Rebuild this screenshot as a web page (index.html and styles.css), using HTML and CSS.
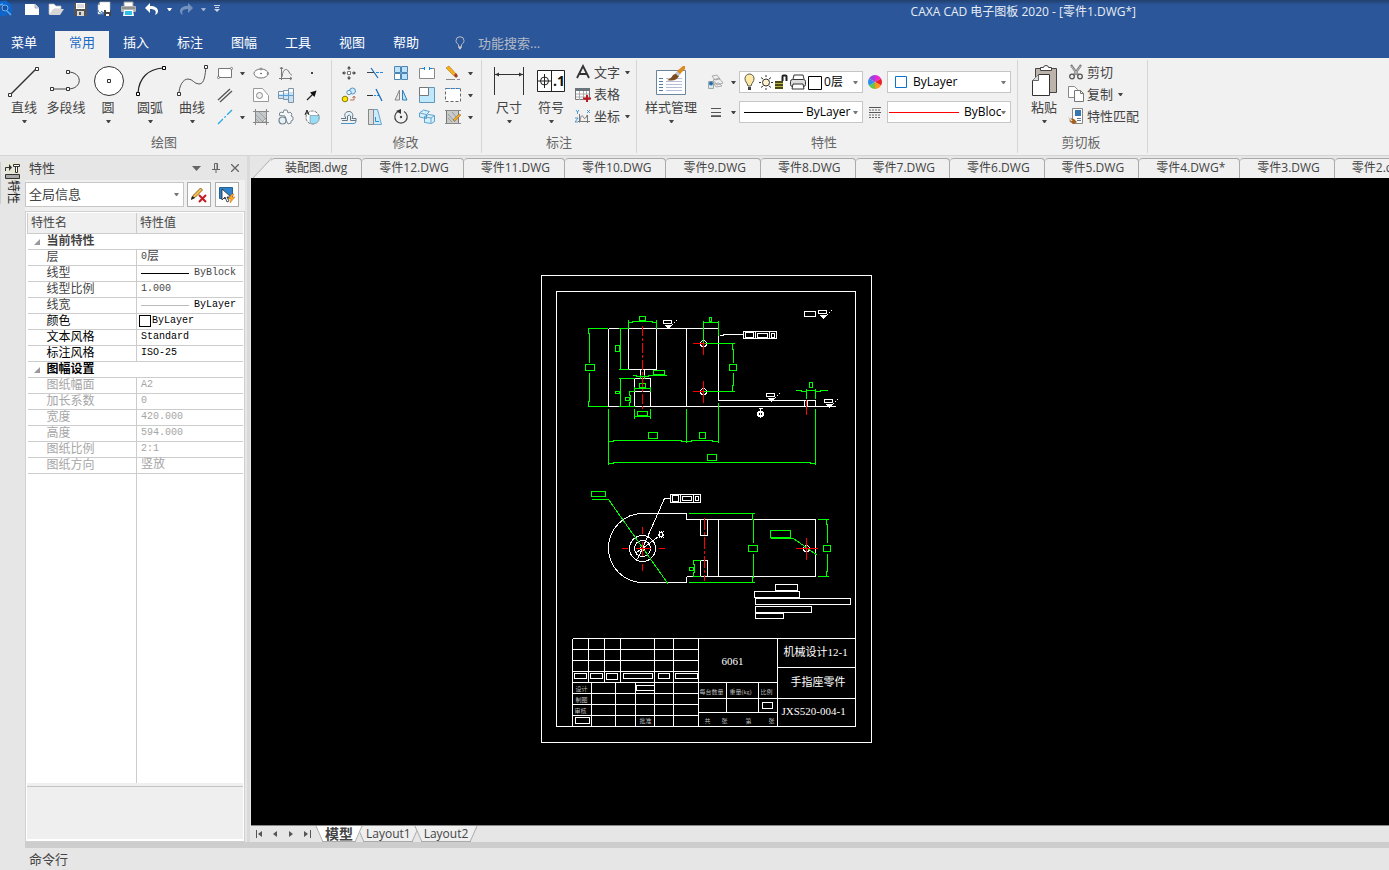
FILE: index.html
```html
<!DOCTYPE html>
<html lang="zh-CN">
<head>
<meta charset="utf-8">
<title>CAXA CAD 电子图板 2020</title>
<link rel="stylesheet" href="styles.css">
</head>
<body>
<header class="titlebar">
  <div class="quick">
    <svg class="logo" width="12" height="18" viewBox="0 0 12 18"><path d="M0 3l5-1 4 3 2 5-1 4M1 14l3-9 4 2-3 8z" fill="none" stroke="#0d66d0" stroke-width="3"/><circle cx="5" cy="8" r="3" fill="#1f4f9f" stroke="#63b5f5"/><path d="M7 11l4 4M0 5l3-1" stroke="#58aef2" stroke-width="1.5"/></svg>
    <button class="qbtn" aria-label="新建"><svg width="16" height="14" viewBox="0 0 16 14"><path d="M1 2h10l4 4v7H1z" fill="#fff"/><path d="M11 2v4h4" fill="#dcdcdc" stroke="#888" stroke-width=".6"/></svg></button>
    <button class="qbtn" aria-label="打开"><svg width="16" height="14" viewBox="0 0 16 14"><path d="M1 2h5l2 2h5v3H6l-3 5H1z" fill="#fff" stroke="#b9b9b9" stroke-width=".7"/><path d="M5 7h11l-4 6H1z" fill="#d6d6d6"/></svg></button>
    <button class="qbtn" aria-label="保存"><svg width="15" height="15" viewBox="0 0 15 15"><path d="M1 1h13v13H2l-1-1z" fill="#555"/><path d="M3 1h9v6H3z" fill="#fff"/><path d="M4 3h7M4 5h7" stroke="#bbb"/><path d="M4 9h7v5H4z" fill="#d8d8d8"/><path d="M6 10h2v3H6z" fill="#555"/></svg></button>
    <button class="qbtn" aria-label="另存为"><svg width="16" height="16" viewBox="0 0 16 16"><path d="M4 1h10v12H2V4z" fill="#fff" stroke="#bbb" stroke-width=".6"/><path d="M4 1v3H2" fill="#999"/><path d="M2 9q1 4 5 3M5 10l3 2-3 2" fill="none" stroke="#2b6fb5"/><path d="M8 9h7v6H8z" fill="#444"/><path d="M10 9h4v2h-4zM10 13h3v2h-3z" fill="#fff"/></svg></button>
    <button class="qbtn" aria-label="打印"><svg width="17" height="16" viewBox="0 0 17 16"><path d="M4 1h9v5H4z" fill="#fff" stroke="#999"/><rect x="1" y="5" width="15" height="6" rx="1" fill="#b4b4b4"/><path d="M2 7h13" stroke="#6c6c6c"/><path d="M4 9h9l1 6H3z" fill="#fff"/><path d="M5 10h7v4H5z" fill="#30bde8"/></svg></button>
    <button class="qbtn" aria-label="撤销"><svg width="16" height="14" viewBox="0 0 16 14"><path d="M6 1v3c5 0 8 2 8 5 0 2-1 3-3 4 2-4 0-6-5-6v4L1 6z" fill="#fff"/></svg></button>
    <button class="qdrop" aria-label="撤销列表"><i class="caret light"></i></button>
    <button class="qbtn dim" aria-label="重做"><svg width="16" height="14" viewBox="0 0 16 14"><path d="M10 1v3C5 4 2 6 2 9c0 2 1 3 3 4-2-4 0-6 5-6v4l5-5z" fill="#fff"/></svg></button>
    <button class="qdrop" aria-label="重做列表"><i class="caret pale"></i></button>
    <button class="qdrop wide" aria-label="自定义快速访问"><svg width="6" height="8" viewBox="0 0 6 8"><path d="M0 .5h6M1 2.500h4" stroke="#ccd5e5"/><path d="M0 4h6L3 7z" fill="#ccd5e5"/></svg></button>
  </div>
  <h1 class="title">CAXA CAD 电子图板 2020 - [零件1.DWG*]</h1>
</header>

<nav class="menu">
  <button class="menu-file">菜单</button>
  <button class="menu-tab active">常用</button>
  <button class="menu-tab">插入</button>
  <button class="menu-tab">标注</button>
  <button class="menu-tab">图幅</button>
  <button class="menu-tab">工具</button>
  <button class="menu-tab">视图</button>
  <button class="menu-tab">帮助</button>
  <label class="search">
    <svg width="10" height="14" viewBox="0 0 10 14"><path d="M3.500 10V8.500C2 7.500 1 6.500 1 4.700a4 4 0 0 1 8 0c0 1.800-1 2.800-2.500 3.800V10" fill="none" stroke="#b8bcc2"/><path d="M3 11h4M4 12.500h2" stroke="#c4c4c4" stroke-width="1.500"/></svg>
    <input type="text" placeholder="功能搜索..." aria-label="功能搜索">
  </label>
</nav>

<section class="ribbon">
  <div class="group">
    <div class="tools">
      <button class="big"><svg width="36" height="36" viewBox="0 0 36 36"><path d="M5 31L30 6" stroke="#333" stroke-width="1.500"/><g fill="#fff" stroke="#333"><path d="M2.500 30.500h3v3h-3zM29.500 4.500h3v3h-3z"/></g></svg><span>直线</span><i class="caret"></i></button>
      <button class="big"><svg width="36" height="36" viewBox="0 0 36 36"><path d="M4 26h16c15 0 15-17 0-17" fill="none" stroke="#444"/><g fill="#fff" stroke="#333"><path d="M2.500 24.500h3v3h-3zM18.500 24.500h3v3h-3zM18.500 7.500h3v3h-3z"/></g></svg><span>多段线</span></button>
      <button class="big"><svg width="36" height="36" viewBox="0 0 36 36"><circle cx="19" cy="18" r="14.500" fill="#fff" stroke="#333"/><path d="M17.500 16.500h3v3h-3z" fill="none" stroke="#333"/></svg><span>圆</span><i class="caret"></i></button>
      <button class="big"><svg width="36" height="36" viewBox="0 0 36 36"><path d="M6 30C7 15 16 6 31 5" fill="none" stroke="#222" stroke-width="1.200"/><g fill="#fff" stroke="#000"><path d="M4.500 29.500h3v3h-3zM30.500 3.500h3v3h-3z"/></g></svg><span>圆弧</span><i class="caret"></i></button>
      <button class="big"><svg width="36" height="36" viewBox="0 0 36 36"><path d="M5 31C5 23 9 16 14 16s6 5 11 5c6 0 6-10 7-17" fill="none" stroke="#555"/><g fill="#fff" stroke="#333"><path d="M3.500 29.500h3v3h-3zM30.500 2.500h3v3h-3z"/></g></svg><span>曲线</span><i class="caret"></i></button>
      <div class="icons draw">
        <button aria-label="矩形"><svg viewBox="0 0 16 16"><path d="M1.500 3.500h13v9h-13z" fill="#fff" stroke="#777"/><g fill="#fff" stroke="#666" stroke-width=".8"><circle cx="1.500" cy="12.500" r="1.100"/><circle cx="14.500" cy="3.500" r="1.100"/></g></svg></button>
        <button class="arrow" aria-label="矩形选项"><i class="caret"></i></button>
        <button aria-label="椭圆"><svg viewBox="0 0 16 16"><ellipse cx="8" cy="8.500" rx="7" ry="4.500" fill="#fff" stroke="#777"/><g fill="#fff" stroke="#666" stroke-width=".8"><circle cx="8" cy="4" r="1"/><circle cx="15" cy="8.500" r=".8"/></g><circle cx="8" cy="8.500" r=".8" fill="#444"/></svg></button>
        <button aria-label="函数曲线"><svg viewBox="0 0 16 16"><path d="M3.500 2v13M1 13.500h13" fill="none" stroke="#777"/><path d="M2 4l1.500-2L5 4M12 12l2 1.500-2 1.500M4 12C5 3 9 3 11 7c1 2 2 3 3 3" fill="none" stroke="#777"/></svg></button>
        <button aria-label="点"><svg viewBox="0 0 16 16"><path d="M7 7h2v2H7z" fill="#444"/></svg></button>

        <button aria-label="平行线"><svg viewBox="0 0 16 16"><path d="M1 13L13 2M3 15L15 4" stroke="#555" stroke-width="1.300"/></svg></button>
        <span></span>
        <button aria-label="轮廓"><svg viewBox="0 0 16 16"><path d="M.5 1.500h9l6 7v6H.500z" fill="#fff" stroke="#999"/><circle cx="6.500" cy="8.500" r="3" fill="#f2f2f2" stroke="#888"/></svg></button>
        <button aria-label="轴"><svg viewBox="0 0 16 16"><path d="M.5 4.500h5v7h-5zM5.500 3.500h5v9h-5zM10.500 1.500h5v14h-5z" fill="#c5e2f6" stroke="#7f93a5"/><path d="M1 5h4v2H1zM6 4h4v2H6zM11 2h4v3h-4z" fill="#f5fafd"/><path d="M0 8.500h16" stroke="#5c9fd6"/></svg></button>
        <button aria-label="箭头"><svg viewBox="0 0 16 16"><path d="M3 13l7-7" stroke="#222" stroke-width="1.200"/><path d="M12.500 3.500L10.500 10 6 5.500z" fill="#111"/></svg></button>

        <button aria-label="中心线"><svg viewBox="0 0 16 16"><path d="M1 15L15 1" stroke="#2ba9e4" stroke-width="1.300" stroke-dasharray="7 2 2 2"/></svg></button>
        <button class="arrow" aria-label="中心线选项"><i class="caret"></i></button>
        <button aria-label="剖面线"><svg viewBox="0 0 16 16"><path d="M2.500 2.500h11v11h-11z" fill="#c3c7ca"/><path d="M2.500 0v16M13.500 0v16M0 2.500h16M0 13.500h16" stroke="#888"/><path d="M3 6l7 7M3 10l3 3M6 3l7 7" stroke="#a0a5a9"/><path d="M13 9l-4 4h4z" fill="#eee" stroke="#777" stroke-width=".6"/></svg></button>
        <button aria-label="齿轮"><svg viewBox="0 0 16 16"><path d="M1.500 6.500V4L4 3l1 1 1-3h3l1 3 2-1 2 2-1 2 2 1v3l-2 1v2l-3 1-1-2-2-6z" fill="#f4f7f9" stroke="#7d8892"/><circle cx="4.500" cy="11.500" r="3.500" fill="#e5f1f9" stroke="#75808a" stroke-width="1.200"/></svg></button>
        <button aria-label="局部放大"><svg viewBox="0 0 16 16"><circle cx="8.500" cy="8.500" r="6.500" fill="#fff" stroke="#777" stroke-dasharray="3 1"/><path d="M6 6.500h9v4c0 3-6 6-9 3z" fill="#9bdcf5" stroke="#6a8799" stroke-width=".6"/><path d="M1 6l2-5 2 5M2 4h2" fill="none" stroke="#222"/></svg></button>
      </div>
    </div>
    <div class="caption">绘图</div>
  </div>

  <div class="group modify-group">
    <div class="tools">
      <div class="icons modify">
        <button aria-label="平移"><svg viewBox="0 0 16 16"><path d="M8 2v3M8 11v3M2 8h3M11 8h3" stroke="#444"/><path d="M8 1l2 2.500H6zM8 15l2-2.500H6zM1 8l2.500-2v4zM15 8l-2.500-2v4z" fill="#444"/><path d="M6.500 6.500h3v3h-3z" fill="#fff" stroke="#777"/></svg></button>
        <button aria-label="裁剪"><svg viewBox="0 0 16 16"><path d="M0 7.500h7" stroke="#444"/><path d="M9 7.500h7" stroke="#248ce0" stroke-dasharray="3 1"/><path d="M4 3l7 10" stroke="#176bba" stroke-width="1.200"/></svg></button>
        <button aria-label="阵列"><svg viewBox="0 0 16 16"><g fill="#bfe3fb" stroke="#4b86b5"><path d="M1.500 1.500h6v6h-6zM8.500 1.500h6v6h-6zM8.500 8.500h6v6h-6z"/><path d="M1.500 8.500h6v6h-6z" fill="#fff"/></g></svg></button>
        <button aria-label="打断"><svg viewBox="0 0 16 16"><path d="M4 3.500H.5v10h15v-10H12" fill="#fff" stroke="#888"/><path d="M3 3.500h2.500M10.500 3.500H13" stroke="#1784dc"/><path d="M5 2h1v3H5zM10 2h1v3h-1z" fill="#1784dc"/></svg></button>
        <button aria-label="删除"><svg viewBox="0 0 16 16"><path d="M1 3l3-2 8 9-2 2z" fill="#f7ae19" stroke="#9e6812" stroke-width=".5"/><path d="M9 10l2-2 2 3-2 2z" fill="#a33a2c"/><path d="M1 14.500h9M12 14.500h3" stroke="#888"/></svg></button>
        <button class="arrow" aria-label="删除选项"><i class="caret"></i></button>

        <button aria-label="平移复制"><svg viewBox="0 0 16 16"><circle cx="11.500" cy="4" r="3" fill="#c9eaff" stroke="#5795c5"/><circle cx="8" cy="5.500" r="2.200" fill="#e4f5ff" stroke="#5795c5"/><circle cx="4" cy="12" r="2.800" fill="#ffe600" stroke="#877a16"/><path d="M9 13h4v-3M11.500 11l1.500-2 1.500 2" fill="none" stroke="#a9563c" stroke-width=".8"/></svg></button>
        <button aria-label="延伸"><svg viewBox="0 0 16 16"><path d="M0 8.500h6" stroke="#333"/><path d="M7 8.500h5" stroke="#248ce0" stroke-dasharray="2 1"/><path d="M9 2l6 12" stroke="#176bba" stroke-width="1.200"/></svg></button>
        <button aria-label="镜像"><svg viewBox="0 0 16 16"><path d="M6.500 3v10H2z" fill="#e6e6e6" stroke="#888"/><path d="M9.500 3v10H14z" fill="#bce5ff" stroke="#317fb8"/></svg></button>
        <button aria-label="缩放"><svg viewBox="0 0 16 16"><path d="M.5.500h15v15H.5z" fill="#bee8fd" stroke="#6496b5"/><path d="M.5.500h9v8h-9z" fill="#fff" stroke="#777"/></svg></button>
        <button aria-label="拉伸"><svg viewBox="0 0 16 16"><path d="M.5 1.500h15v13H.5z" fill="#fff" stroke="#666" stroke-dasharray="3 2"/><path d="M2 1.500h13" stroke="#3a8dd2" stroke-dasharray="3 2"/></svg></button>
        <button class="arrow" aria-label="拉伸选项"><i class="caret"></i></button>

        <button aria-label="等距线"><svg viewBox="0 0 16 16"><path d="M0 9.500h5C2 5 5 2.500 8 2.500s5 3 3 7h4v2H9.500V7q-1-2-3 0v4.500H1" fill="#e4f4fd" stroke="#68757e"/><path d="M0 14.500h13q2 0 2-3" fill="none" stroke="#4b94c9"/></svg></button>
        <button aria-label="倒角"><svg viewBox="0 0 16 16"><path d="M1.500.500h9l4 15h-13z" fill="#c9ebfb" stroke="#69a5c9"/><path d="M1.500.500h5v15h-5z" fill="#ddd" stroke="#888"/><path d="M8.500 8v4.500H12" fill="none" stroke="#338fca"/></svg></button>
        <button aria-label="旋转"><svg viewBox="0 0 16 16"><path d="M11 2.500A6.200 6.200 0 1 1 5 2.500" fill="none" stroke="#444" stroke-width="1.200"/><path d="M8 0L3 2l5 3z" fill="#333"/><circle cx="8" cy="8" r="1.200" fill="#444"/></svg></button>
        <button aria-label="分解"><svg viewBox="0 0 16 16"><path d="M.5 4l4-3 6 1.500-3 3v4L.5 8zM5.500 7.500l4-2 6 1v6l-3 2-7-1z" fill="#d4effd" stroke="#3a91c7" stroke-width=".8"/><path d="M1 4l6 1.500M6 8l6 1 3-2M12 9v5" fill="none" stroke="#5a94b8" stroke-width=".8"/></svg></button>
        <button aria-label="编辑填充"><svg viewBox="0 0 16 16"><path d="M1.500 1.500h12v13h-12z" fill="#c8caca" stroke="#777"/><path d="M0 1.500h16M0 14.500h16" stroke="#888"/><path d="M3 5l7 8M3 9l4 4M7 3l5 6" stroke="#999"/><path d="M8 11l6-6 2 1-6 6z" fill="#f3a721" stroke="#8b6324" stroke-width=".5"/></svg></button>
        <button class="arrow" aria-label="填充选项"><i class="caret"></i></button>
      </div>
    </div>
    <div class="caption">修改</div>
  </div>

  <div class="group note-group">
    <div class="tools">
      <button class="big"><svg width="36" height="36" viewBox="0 0 36 36"><path d="M3.500 4v28M32.500 4v28M4 11.500h28" stroke="#333"/><path d="M4 11.500l4-2v4zM32 11.500l-4-2v4z" fill="#333"/></svg><span>尺寸</span><i class="caret"></i></button>
      <button class="big"><svg width="36" height="36" viewBox="0 0 36 36"><path d="M4.500 7.500h27v21h-27zM18.500 7.500v21" fill="#fff" stroke="#222"/><circle cx="11.500" cy="18" r="4" fill="none" stroke="#222"/><path d="M11.500 11v14M5 18h13" stroke="#222"/><text class="tolerance" x="20" y="23">.1</text></svg><span>符号</span><i class="caret"></i></button>
      <div class="rows">
        <button class="row"><svg viewBox="0 0 16 16"><path d="M2 14L8 2l6 12M4 10h8" fill="none" stroke="#333" stroke-width="1.800"/></svg><span>文字</span><i class="caret"></i></button>
        <button class="row"><svg viewBox="0 0 16 16"><path d="M.5 2.500h14v11H.5z" fill="#fff" stroke="#777"/><path d="M0 2h15v3H0z" fill="#6c747b"/><path d="M1 8h13M1 11h13M4.500 5v9M8.500 5v9M11.500 5v9" stroke="#aaa"/><path d="M12 9v7M8 12.500h8" stroke="#c01622" stroke-width="2"/></svg><span>表格</span></button>
        <button class="row"><svg viewBox="0 0 16 16"><path d="M4.500 6v8.500M3 13.500h12M5 13c1-8 3-5 4-3s3-2 3-3M12.500 7v8" fill="none" stroke="#777"/><path d="M1 2l1.500 2L4 2M2.500 4v2M12 2l3 3M15 2l-3 3M0 10h3l-3 4h3" fill="none" stroke="#2688ce" stroke-width=".8"/></svg><span>坐标</span><i class="caret"></i></button>
      </div>
    </div>
    <div class="caption">标注</div>
  </div>

  <div class="group prop-group">
    <div class="tools">
      <button class="big style-btn"><svg width="36" height="36" viewBox="0 0 36 36"><path d="M3.500 7.500h29v24h-29z" fill="#fff" stroke="#68859c"/><path d="M6 15.500h4M6 18.500h4M6 21.500h4M6 24.500h4M6 27.500h4" stroke="#557c9d"/><path d="M13 15.500h16M13 18.500h16M13 21.500h16M13 24.500h16M13 27.500h16" stroke="#b5bcd6"/><path d="M14 17q4-1 6-5l4-2 2 3q-3 6-12 4z" fill="#7d4d20"/><path d="M22 10l3-2 3 3-3 2z" fill="#bac7d1"/><path d="M24 8l6-5h2v3l-5 5z" fill="#dc8a21"/></svg><span>样式管理</span><i class="caret"></i></button>
      <div class="props">
        <button aria-label="图层"><svg width="16" height="16" viewBox="0 0 16 16"><path d="M.5 7.500h5v7h-5z" fill="#dbe6ed" stroke="#9aa"/><circle cx="3" cy="9.500" r="2" fill="#286dab"/><path d="M4 2l5-1 3 4-5 1zM5 6l6-2 4 5-6 2zM6 10l5-1 3 3-6 1z" fill="#eee" stroke="#9a9a9a" stroke-width=".8"/></svg></button>
        <button class="arrow" aria-label="图层选项"><i class="caret"></i></button>
        <div class="combo">
          <svg class="layer-icons" width="80" height="18" viewBox="0 0 80 18">
            <path d="M4 13C3 9 1 9 1 5.500a4.500 4.500 0 0 1 9 0C10 9 8 9 7 13z" fill="#ffe9a3" stroke="#555"/><path d="M4 14h3v3H4z" fill="#444"/>
            <circle cx="22" cy="9.500" r="3.500" fill="#fff2cf" stroke="#333"/><path d="M22 2v2M22 15v2M15 9.500h2M27 9.500h2M17 4.500l2 1.500M25 6l2-1.500M17 14.500l2-1.500M25 13l2 1.500" stroke="#333"/>
            <path d="M31 8h8v8h-8z" fill="#4b4a13"/><path d="M31 10.500h8M31 13.500h8" stroke="#b8b44a"/><path d="M38.500 8V3.500q0-1 1-1h2q1 0 1 1V8" fill="none" stroke="#222" stroke-width="2"/>
            <path d="M49 6l1-4h9l1 4" fill="#fff" stroke="#333"/><rect x="46.500" y="6.500" width="15" height="7" rx="2" fill="#ddd" stroke="#333"/><path d="M49 11h10l1 5H48z" fill="#fff" stroke="#333"/>
            <path d="M64.500 3.500h13v13h-13z" fill="#fff" stroke="#000"/>
          </svg>
          <select aria-label="当前层"><option>0层</option></select><i class="caret gray"></i>
        </div>
        <button class="swatch" aria-label="颜色"><svg width="16" height="16" viewBox="0 0 16 16"><path d="M8 8L8 1A7 7 0 0 1 14 4.500z" fill="#ee25d5"/><path d="M8 8l6-3.500a7 7 0 0 1 0 7z" fill="#e9232c"/><path d="M8 8l6 3.500A7 7 0 0 1 8 15z" fill="#ff9818"/><path d="M8 8v7a7 7 0 0 1-6-3.500z" fill="#62c84c"/><path d="M8 8l-6 3.500a7 7 0 0 1 0-7z" fill="#2f8bed"/><path d="M8 8L2 4.500A7 7 0 0 1 8 1z" fill="#9646dc"/></svg></button>
        <div class="combo color"><svg width="12" height="12" viewBox="0 0 12 12"><path d="M.5.500h11v11H.5z" fill="#fff" stroke="#0b72cf"/></svg><select aria-label="颜色"><option>ByLayer</option></select><i class="caret gray"></i></div>

        <button aria-label="线宽"><svg width="16" height="16" viewBox="0 0 16 16"><path d="M3 4.500h10M3 8.500h10M3 12.500h10" stroke="#555"/><path d="M3 11.500h10" stroke="#777"/></svg></button>
        <button class="arrow" aria-label="线宽选项"><i class="caret"></i></button>
        <div class="combo"><hr class="sample"><select aria-label="线宽"><option>ByLayer</option></select><i class="caret gray"></i></div>
        <button class="swatch" aria-label="线型"><svg width="14" height="14" viewBox="0 0 14 14"><path d="M1 2.500h12M1 7.500h12" stroke="#555"/><path d="M1 5h12M1 10h12M1 12.500h12" stroke="#666" stroke-dasharray="2 1"/></svg></button>
        <div class="combo type"><hr class="sample red"><select aria-label="线型"><option>ByBlock</option></select><i class="caret gray"></i></div>
      </div>
    </div>
    <div class="caption">特性</div>
  </div>

  <div class="group clip-group">
    <div class="tools">
      <button class="big"><svg width="36" height="36" viewBox="0 0 36 36"><path d="M9.500 5.500h21v24h-21z" fill="#bcb4ab" stroke="#444"/><path d="M14.500 7.500v-3h3q0-2 2.500-2t2.500 2h3v3z" fill="#fff" stroke="#444"/><path d="M12.500 11.500h11v21h-17v-15z" fill="#fff" stroke="#333"/><path d="M6.500 17.500h6v-6" fill="#ddd" stroke="#666"/></svg><span>粘贴</span><i class="caret"></i></button>
      <div class="rows">
        <button class="row"><svg viewBox="0 0 16 16"><path d="M3 1l7 10M13 1L6 11" stroke="#777" stroke-width="2.200"/><path d="M3.500 2l6 8.500M12.500 2l-6 8.500" stroke="#eee" stroke-width=".6"/><circle cx="4" cy="12.500" r="2.300" fill="none" stroke="#555" stroke-width="1.300"/><circle cx="12" cy="12.500" r="2.300" fill="none" stroke="#555" stroke-width="1.300"/></svg><span>剪切</span></button>
        <button class="row"><svg viewBox="0 0 16 16"><path d="M.5.500h6l3 3v8h-9z" fill="#fff" stroke="#888"/><path d="M6.500 4.500h6l3 3v8h-9z" fill="#fff" stroke="#777"/><path d="M12.500 4.500v3h3" fill="none" stroke="#777"/></svg><span>复制</span><i class="caret"></i></button>
        <button class="row"><svg viewBox="0 0 16 16"><path d="M4.500.500h10v15h-10z" fill="#fff" stroke="#888"/><path d="M7 2h6v6H7z" fill="#3577ae"/><path d="M9 10.500h4M9 12.500h4" stroke="#678"/><path d="M1 10l5 1 3 3-3 2-4-2z" fill="#a65f19"/><path d="M0 9l4 4" stroke="#ddd" stroke-width="1.500"/></svg><span>特性匹配</span></button>
      </div>
    </div>
    <div class="caption">剪切板</div>
  </div>
</section>

<main class="work">
  <aside class="dock">
    <button class="dock-tab"><svg width="16" height="18" viewBox="0 0 16 18"><path d="M0 0h16v18H0z" fill="#e9e8d8"/><path d="M.5 9V5.500H5" fill="none" stroke="#333"/><path d="M4 2l3 3.500L4 9z" fill="#333"/><path d="M8.500 2.500h6v2h-6zM10.500 4.500h2v6h-2z" fill="#fff" stroke="#333"/><path d="M.5 12.500h14v4H.5z" fill="#aaa" stroke="#333"/></svg><span>特性</span></button>
  </aside>
  <section class="panel">
    <div class="panel-head">
      <h2>特性</h2>
      <button aria-label="菜单"><svg width="9" height="5" viewBox="0 0 9 5"><path d="M0 0h9L4.500 5z" fill="#666"/></svg></button>
      <button aria-label="固定"><svg width="8" height="10" viewBox="0 0 8 10"><path d="M2.500 6V.5h3V6M0 6.500h8M4 7v3M5 1v5" fill="none" stroke="#666"/></svg></button>
      <button aria-label="关闭"><svg width="8" height="8" viewBox="0 0 8 8"><path d="M0 0l8 8M8 0L0 8" stroke="#666" stroke-width="1.300"/></svg></button>
    </div>
    <div class="filter">
      <div class="combo scope"><select aria-label="选择范围"><option>全局信息</option></select><i class="caret gray"></i></div>
      <button class="tool" aria-label="取消选择"><svg width="18" height="18" viewBox="0 0 18 18"><path d="M1.500 13l2-4 7-7 2 2-7 7z" fill="#f4c04d" stroke="#704b14" stroke-width=".8"/><path d="M1 14l1-4 3 2z" fill="#222"/><path d="M9 9l7 7M16 9l-7 7" stroke="#c91b22" stroke-width="2"/></svg></button>
      <button class="tool" aria-label="快速选择"><svg width="18" height="18" viewBox="0 0 18 18"><path d="M1.500 1.500h13v11h-13z" fill="#2e82cb" stroke="#27618f"/><path d="M4 3v11l3-3 2 5 2-1-2-4h4z" fill="#fff" stroke="#222" stroke-width=".8"/><path d="M14 8l-4 5h3l-1 4 5-6h-3l2-3z" fill="#ffac24" stroke="#c56a0c" stroke-width=".5"/></svg></button>
    </div>
    <div class="sheet">
      <table>
        <colgroup><col class="name-col"><col></colgroup>
        <thead><tr><th>特性名</th><th>特性值</th></tr></thead>
        <tbody class="on">
          <tr class="section"><th colspan="2">当前特性</th></tr>
          <tr><td>层</td><td><div class="cell mixed">0<span class="han">层</span></div></td></tr>
          <tr><td>线型</td><td><div class="cell"><hr class="line">ByBlock</div></td></tr>
          <tr><td>线型比例</td><td>1.000</td></tr>
          <tr><td>线宽</td><td class="strong"><div class="cell"><hr class="line thin">ByLayer</div></td></tr>
          <tr class="strong"><td>颜色</td><td><div class="cell chip-cell"><span class="chip"></span>ByLayer</div></td></tr>
          <tr class="strong"><td>文本风格</td><td>Standard</td></tr>
          <tr class="strong"><td>标注风格</td><td>ISO-25</td></tr>
        </tbody>
        <tbody class="off">
          <tr class="section strong"><th colspan="2">图幅设置</th></tr>
          <tr><td>图纸幅面</td><td>A2</td></tr>
          <tr><td>加长系数</td><td>0</td></tr>
          <tr><td>宽度</td><td>420.000</td></tr>
          <tr><td>高度</td><td>594.000</td></tr>
          <tr><td>图纸比例</td><td>2:1</td></tr>
          <tr><td>图纸方向</td><td><div class="cell mixed"><span class="han">竖放</span></div></td></tr>
        </tbody>
      </table>
      <div class="blank"><span></span></div>
      <div class="hint"></div>
    </div>
  </section>

  <section class="editor">
    <div class="files">
      <button class="file first">装配图.dwg</button>
      <button class="file">零件12.DWG</button>
      <button class="file">零件11.DWG</button>
      <button class="file">零件10.DWG</button>
      <button class="file">零件9.DWG</button>
      <button class="file">零件8.DWG</button>
      <button class="file">零件7.DWG</button>
      <button class="file">零件6.DWG</button>
      <button class="file">零件5.DWG</button>
      <button class="file">零件4.DWG*</button>
      <button class="file">零件3.DWG</button>
      <button class="file">零件2.dwg</button>
    </div>
    <div class="canvas">
      <svg class="drawing" width="331" height="468" viewBox="541 275 331 468" role="img" aria-label="手指座零件图">
        <defs>
          <g id="rough"><path d="M0 0h8v3H0zM1 5h7M2 6h5M3 7h3M4 8h1M8 5l1-1M10 3l1-1M12 1l1-1"/></g>
        </defs>
        <g transform="translate(.5 .5)">
          <!-- sheet frames -->
          <g class="w"><path d="M541 275h330v467H541zM556 291h299v435H556z"/></g>

          <!-- front view outline -->
          <g class="w">
            <path d="M608 328H718V400H815V406M608 328V406H835M686 328V406M628 328V369H656V328M640 369V378M644 369V378M634 406V378H650V406M634 391H650M804 400V406M807 400V406"/>
            <circle cx="703" cy="343" r="3"/><circle cx="703" cy="391" r="3"/>
            <use href="#rough" x="663" y="320"/><use href="#rough" x="818" y="310"/><use href="#rough" x="766" y="393"/><use href="#rough" x="824" y="399"/>
            <path d="M804 311h11v5h-11z"/>
            <path d="M719 335H723V334H743M743 331h33v7h-33zM745 332h8v5h-8zM755 331v7M757 333h10v4h-10zM769 331v7M771 333h3v4h-3z"/>
            <path d="M758 408h4M760 408v9M757 412h6v3h-6zM758 411v5h4v-5z"/>
          </g>
          <g class="g">
            <path d="M628 319V328M656 319V328M628 322H632V321H652V322H656M639 316h6v4h-6z"/>
            <path d="M607 328H588V333H589V362M589 372V401H588V406H607M585 364h9v6h-9z"/>
            <path d="M618 328H628M620 328V369M618 369H628M615 345h4v6h-4zM618 378H634M620 378V406M618 406H634M615 391h4v2h-4zM628 391H634M629 391V395H630V402H629V406M625 397h4v3h-4z"/>
            <path d="M632 375H636V376H648V375H666M640 374V378M644 374V378M653 370h11v4h-11zM634 386V391M650 386V391M634 388H650M639 383h6v4h-6z"/>
            <path d="M634 408V418M650 408V418M634 416H650M637 411h10v4h-10z"/>
            <path d="M703 320V343H734M718 320V335M703 322H718M709 317h2v4h-2zM703 391H734M732 343V349H733V362M733 372V385H732V391M729 364h7v6h-7z"/>
            <path d="M608 408V464M686 408V442M718 402V442M815 408V464M608 441H613V440H681V441H691V440H712V441H718M608 463H613V462H810V463H815M648 432h9v6h-9zM699 432h6v6h-6zM707 454h9v6h-9z"/>
            <path d="M795 390H801V391H806V390H815V391H820V390H827M806 388V398M815 388V398M809 382h3v5h-3z"/>
          </g>
          <g class="r">
            <path d="M642 325V410" stroke-dasharray="10 2 3 2"/>
            <path d="M692 343H704M703 343V354M692 391H703M703 380V402M806 399V414"/>
          </g>

          <!-- plan view -->
          <g class="w">
            <path d="M686 519V513H642A34 34.500 0 0 0 642 582H686V576M686 519H815V576H686M718 519V576M700 519V535H707V519M700 576V560H707V576"/>
            <circle cx="642" cy="548" r="13"/><circle cx="642" cy="548" r="8"/><circle cx="642" cy="548" r="2"/><circle cx="806" cy="548" r="3"/>
            <path d="M637 559L664 498H670M642 548L658 536M636 552L646 545"/>
            <path d="M659 532h3v4h-3zM658 533v2M663 533v2M660 531h1M660 537h1M658 531h1M662 531h1M658 537h1M662 537h1"/>
            <path d="M670 494h30v8h-30zM672 495h6v6h-6zM680 494v8M682 496h9v4h-9zM693 494v8M695 496h3v4h-3z"/>
            <path d="M775 584h22v6h-22zM754 591h45v6h-45zM755 598h95v6h-95zM755 606h56v6h-56zM755 613h28v5h-28z"/>
          </g>
          <g class="g">
            <path d="M591 499H608L668 584M591 491h14v5h-14z"/>
            <path d="M688 513H754M752 513V519H753V542M753 553V577H752V582M688 582H754M748 545h9v6h-9z"/>
            <path d="M817 519H828M826 519V524H827V542M827 553V571H826V576M817 576H828M823 545h7v6h-7z"/>
            <path d="M692 560H700M693 560V564H694V572H693V576M692 576H700M689 567h4v3h-4zM770 530h20v7h-20zM770 538H793L817 555"/>
          </g>
          <g class="r">
            <path d="M704 517V580" stroke-dasharray="12 2 3 2"/>
            <path d="M621 548h6M635 548h15M658 548h6M642 526v7M642 541v14M642 563v7M795 548H817M806 537V559"/>
          </g>

          <!-- title block -->
          <g class="w">
            <path d="M572 638H855M572 638V726M572 649H698M572 660H698M572 671H698M572 682H777M572 693H698M572 704H698M572 715H698M588 638V682M604 638V682M620 638V682M654 638V726M673 638V726M698 638V726M591 682V726M615 682V726M635 682V726M777 638V726M777 667H855M698 698H855M698 712H777M726 682V712M758 682V712"/>
            <path d="M574 673h12v5h-12zM590 673h12v5h-12zM606 673h11v6h-11zM623 673h29v5h-29zM658 673h11v5h-11zM675 673h22v5h-22zM636 685h18v5h-18zM575 717h14v6h-14zM762 702h10v6h-10z"/>
          </g>
          <g class="t">
            <text x="721" y="664">6061</text>
            <text x="783" y="655">机械设计12-1</text>
            <text x="790" y="685">手指座零件</text>
            <text x="781" y="714">JXS520-004-1</text>
          </g>
          <g class="s">
            <text x="575" y="690">设计</text><text x="575" y="701">制图</text><text x="574" y="712">审核</text><text x="639" y="722">批准</text>
            <text x="699" y="693">每台数量</text><text x="729" y="693">重量(kg)</text><text x="760" y="693">比例</text>
            <text x="704" y="722">共</text><text x="721" y="722">张</text><text x="745" y="722">第</text><text x="768" y="722">张</text>
          </g>
        </g>
      </svg>
    </div>
    <div class="sheets">
      <div class="steps">
        <button aria-label="第一页"><svg viewBox="0 0 8 8"><path d="M1.500 0v8" stroke="#555"/><path d="M7 1v6L3 4z" fill="#555"/></svg></button>
        <button aria-label="上一页"><svg viewBox="0 0 8 8"><path d="M6 1v6L2 4z" fill="#555"/></svg></button>
        <button aria-label="下一页"><svg viewBox="0 0 8 8"><path d="M2 1v6l4-3z" fill="#555"/></svg></button>
        <button aria-label="最后一页"><svg viewBox="0 0 8 8"><path d="M7.500 0v8" stroke="#555"/><path d="M1 1v6l4-3z" fill="#555"/></svg></button>
      </div>
      <button class="layout current">模型</button>
      <button class="layout">Layout1</button>
      <button class="layout">Layout2</button>
    </div>
  </section>
</main>
<footer class="command">命令行</footer>
</body>
</html>
```
FILE: styles.css
```css
* { box-sizing: border-box; }

body {
  margin: 0;
  min-height: 100vh;
  display: flex;
  flex-direction: column;
  overflow: hidden;
  background: #e6e6e6;
  color: #444;
  font: 13px/16px "Open Sans", "Noto Sans CJK SC", sans-serif;
}

button, select, input {
  margin: 0;
  padding: 0;
  border: 0;
  background: transparent;
  color: inherit;
  font: inherit;
}

svg { display: block; flex: none; }
h1, h2 { margin: 0; font-weight: 400; }
hr { margin: 0; border: 0; }

.caret {
  flex: none;
  box-sizing: content-box;
  width: 1px;
  height: 0;
  border: 2px solid transparent;
  border-top: 3px solid #444;
  border-bottom: 0;
}
.caret.light { border-top-color: #fff; }
.caret.pale { border-top-color: #9fb1cf; }
.caret.gray { border-top-color: #777; }

/* title bar */
.titlebar {
  display: flex;
  justify-content: space-between;
  height: 31px;
  padding-right: 253px;
  background: linear-gradient(#223f6d, #2b579a 5px);
  color: #e8edf5;
}
.quick { display: flex; align-items: center; height: 18px; }
.logo { margin-right: 8px; }
.qbtn { display: flex; justify-content: center; width: 24px; }
.qbtn.dim { opacity: .35; }
.qdrop { display: flex; justify-content: center; width: 10px; }
.qdrop.wide { width: 18px; }
.title { font-size: 12px; line-height: 24px; }

/* menu */
.menu { display: flex; height: 27px; background: #2b579a; color: #fff; }
.menu-file, .menu-tab { padding-bottom: 5px; }
.menu-file { width: 55px; padding-left: 11px; text-align: left; }
.menu-tab { width: 54px; }
.menu-tab.active { background: #f1f1f1; color: #1a6bc4; }
.search { display: flex; align-items: center; gap: 13px; margin-left: 22px; padding-bottom: 3px; }
.search input { width: 90px; outline: 0; }
.search input::placeholder { color: #b3bac6; opacity: 1; }

/* ribbon */
.ribbon {
  display: flex;
  padding: 2px 0;
  height: 98px;
  background: #f1f1f1;
  border-bottom: 1px solid #d4d4d4;
}
.group { padding: 1px 6px 0 3px; border-right: 1px solid #d6d6d6; }
.tools { display: flex; height: 70px; }
.caption { line-height: 22px; text-align: center; color: #666; }
.modify-group { padding-left: 4px; }
.note-group { padding-left: 6px; }
.prop-group { padding-left: 0; }
.clip-group { padding: 1px 8px 0 5px; }

.big {
  display: flex;
  flex-direction: column;
  align-items: center;
  width: 42px;
  padding-top: 2px;
  white-space: nowrap;
}
.big .caret { margin-top: 5px; }
.style-btn { width: 68px; }
.tolerance { font: bold 14px "Open Sans", sans-serif; fill: #111; }

.icons { display: grid; grid-auto-rows: 22px; padding-top: 1px; }
.icons button { display: grid; place-items: center; }
.icons svg { width: 16px; height: 16px; }
.draw { grid-template-columns: 22px 13px 24px 26px 26px; margin-left: 1px; }
.modify { grid-template-columns: repeat(5, 26px) 9px; }

.rows { display: flex; flex-direction: column; margin-left: 3px; }
.row { display: flex; align-items: center; gap: 3px; height: 22px; }
.row svg { width: 16px; height: 16px; }
.row .caret { margin-left: 2px; }

.props {
  display: grid;
  grid-template-columns: 22px 12px 124px 24px 124px;
  grid-auto-rows: 22px;
  row-gap: 8px;
  padding-top: 10px;
}
.props button { display: grid; place-items: center; }

.combo {
  display: flex;
  align-items: center;
  min-width: 0;
  padding: 0 4px 0 4px;
  border: 1px solid #c6c6c6;
  background: #fff;
  color: #000;
  font-size: 12px;
}
.combo select {
  flex: 1;
  min-width: 0;
  appearance: none;
  outline: 0;
}
.combo.color { padding-left: 7px; }
.combo.color select { margin-left: 6px; }
.sample { flex: none; width: 59px; height: 1px; margin-right: 3px; background: #000; }
.sample.red { width: 70px; margin-right: 5px; background: #f00; }
.combo.type { padding-left: 1px; }

/* work area */
.work { flex: 1; display: flex; min-height: 0; }
.dock { width: 25px; padding-top: 6px; }
.dock-tab { display: flex; flex-direction: column; align-items: center; width: 24px; border-left: 1px solid #ccc; }
.dock-tab span { writing-mode: vertical-rl; text-orientation: sideways; color: #222; font-size: 12px; }

.panel {
  display: flex;
  flex-direction: column;
  width: 226px;
  padding-right: 6px;
  background: linear-gradient(90deg, #e6e6e6 222px, #dadada 222px, #dadada 225px, #e6e6e6 225px);
}
.panel-head { display: flex; align-items: center; gap: 11px; height: 24px; padding: 0 6px 0 4px; }
.panel-head h2 { flex: 1; font-size: 13px; }
.filter { display: flex; gap: 4px; height: 31px; padding: 2px 0 4px; background: #f0f0f0; }
.combo.scope { width: 159px; margin-right: -1px; padding-left: 3px; color: #444; font-size: 13px; }
.scope select { padding-bottom: 2px; }
.tool { display: grid; place-items: center; width: 24px; background: #fdfdfd; border: 1px solid #adadad; }

.sheet {
  flex: 1;
  display: flex;
  flex-direction: column;
  padding: 1px;
  border: 1px solid #d0d0d0;
  background: #fff;
}
table { width: 100%; table-layout: fixed; border-collapse: collapse; }
.name-col { width: 109px; }
thead th {
  height: 20px;
  padding: 0 3px;
  border: solid #ccc;
  border-width: 0 0 1px 1px;
  background: #f0f0f0;
  font-size: 12px;
  font-weight: 400;
  text-align: left;
}
tbody td, tbody th { height: 16px; padding: 0 0 0 19px; border-bottom: 1px solid #ccc; font-size: 12px; line-height: 14px; }
tbody td + td { padding: 0 7px 0 4px; border-left: 1px solid #ccc; font: 10px/14px "Liberation Mono", "Noto Sans CJK SC", monospace; }
tbody .han { font-size: 12px; line-height: 14px; }
tbody th { position: relative; font-weight: 700; text-align: left; }
tbody th::before {
  content: "";
  position: absolute;
  left: 6px;
  top: 5px;
  border-left: 6px solid transparent;
  border-bottom: 6px solid #999;
}
tbody .strong, tbody td.strong, .off .strong th { color: #000; }
.off { color: #a6a6a6; }
.cell { display: flex; align-items: center; justify-content: space-between; }
.cell.mixed { justify-content: flex-start; }
.line { width: 48px; height: 1px; background: #000; }
.line.thin { background: #bbb; }
.chip-cell { justify-content: flex-start; gap: 1px; margin-left: -2px; }
.chip { width: 12px; height: 12px; border: 1px solid #000; }
.blank { flex: 1; }
.blank span { display: block; width: 110px; height: 100%; border-right: 1px solid #ccc; }
.hint { height: 56px; margin-bottom: 1px; background: #efefef; box-shadow: inset 0 3px #efefef, inset 0 4px #c4c4c4; }

/* documents */
.editor { flex: 1; min-width: 0; display: flex; flex-direction: column; }
.files { display: flex; height: 22px; padding: 2px 0 0 20px; overflow: hidden; }
.file {
  flex: none;
  padding: 0 14px 1px 17px;
  border: 1px solid #aaa;
  border-width: 1px 1px 0 0;
  border-radius: 4px 4px 0 0;
  background: #f0f0f0;
  font-size: 12px;
}
.file.first { position: relative; padding: 0 14px 1px 14px; }
.file.first::before {
  content: "";
  position: absolute;
  top: -1px;
  left: -10px;
  width: 20px;
  height: 22px;
  border-left: 1px solid #aaa;
  background: #f0f0f0;
  transform: skewX(-43deg);
  z-index: -1;
}
.canvas { flex: 1; padding: 97px 0 0 290px; background: #000; overflow: hidden; }
.drawing { shape-rendering: crispEdges; }
.w, .g, .r { fill: none; stroke: #fff; stroke-width: 1px; }
.g { stroke: #0f0; }
.r { stroke: #f00; }
.t { fill: #fff; font: 11px "Liberation Serif", "Noto Sans CJK SC", serif; }
.s { fill: #bbb; font: 6px "Liberation Serif", "Noto Sans CJK SC", serif; }

.sheets { display: flex; height: 17px; border-top: 1px solid #888; background: #e6e6e6; }
.steps { display: flex; width: 66px; }
.steps button { display: grid; place-items: center; width: 16px; }
.steps svg { width: 8px; height: 8px; }
.layout { position: relative; z-index: 0; padding: 0 8px; margin-right: -3px; font-size: 12px; line-height: 14px; }
.layout::before, .layout::after {
  content: "";
  position: absolute;
  z-index: -1;
  top: 0;
  bottom: 0;
  border: 1px solid #aaa;
  border-top: 0;
  background: #efefef;
}
.layout::before { left: 2px; right: 40%; border-right: 0; transform: skewX(24deg); }
.layout::after { right: 2px; left: 40%; border-left: 0; transform: skewX(-24deg); }
.layout.current { z-index: 1; font-size: 14px; font-weight: 700; }
.layout.current::before, .layout.current::after { background: #fff; }

.command {
  height: 28px;
  margin-left: 25px;
  padding: 0 4px;
  border-top: 6px solid #cdcdcd;
  line-height: 22px;
}
```
